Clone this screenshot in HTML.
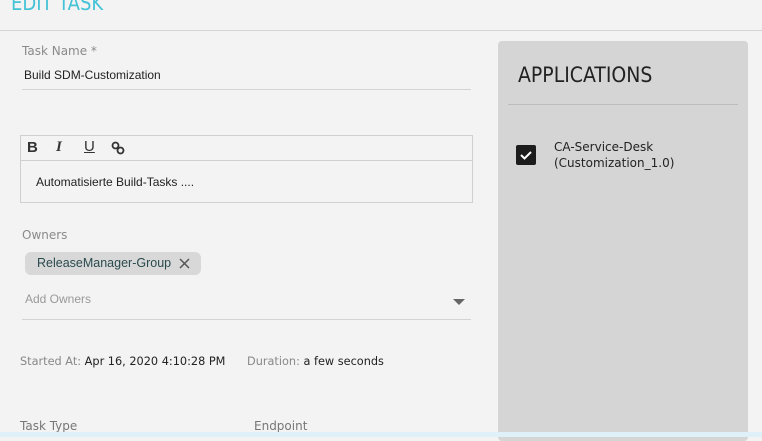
<!DOCTYPE html>
<html><head><style>
body{margin:0;width:762px;height:437px;background:#f3f3f3;position:relative;overflow:hidden;font-family:"Liberation Sans",sans-serif;}
.a{position:absolute;white-space:nowrap}
.dv{font-family:"DejaVu Sans",sans-serif}
</style></head><body>
<div class="a" style="left:11px;top:-9px;font-size:20px;color:#45c3d6;font-family:'DejaVu Sans Condensed','DejaVu Sans',sans-serif;letter-spacing:0px">EDIT TASK</div>
<div class="a" style="left:0;top:30px;width:762px;height:1px;background:#d6d6d6"></div>

<div class="a dv" style="left:22px;top:44px;font-size:12px;color:#8a8a8a">Task Name *</div>
<div class="a" style="left:24px;top:68px;font-size:12px;color:#222">Build SDM-Customization</div>
<div class="a" style="left:22px;top:89px;width:449px;height:1px;background:#d3d3d3"></div>

<div class="a" style="left:20px;top:135px;width:451px;height:66px;border:1px solid #cfcfcf"></div>
<div class="a" style="left:21px;top:160px;width:451px;height:1px;background:#cfcfcf"></div>
<div class="a" style="left:27px;top:139px;font-size:15px;font-weight:bold;color:#333">B</div>
<div class="a" style="left:56px;top:139px;font-size:15px;font-style:italic;font-family:'Liberation Serif',serif;font-weight:bold;color:#333">I</div>
<div class="a" style="left:84px;top:138px;font-size:15px;text-decoration:underline;color:#333">U</div>
<svg class="a" style="left:111px;top:141px" width="14" height="14" viewBox="0 0 14 14"><g fill="none" stroke="#333" stroke-width="1.8"><rect x="1.5" y="1.5" width="6" height="6" rx="3"/><rect x="6.5" y="6.5" width="6" height="6" rx="3"/></g></svg>
<div class="a" style="left:36px;top:175px;font-size:12px;color:#222">Automatisierte Build-Tasks ....</div>

<div class="a dv" style="left:22px;top:228px;font-size:12px;color:#8a8a8a">Owners</div>
<div class="a" style="left:25px;top:252px;width:176px;height:23px;border-radius:6px;background:#d8d8d8"></div>
<div class="a" style="left:37px;top:256px;font-size:12.5px;color:#2a4a4e">ReleaseManager-Group</div>
<svg class="a" style="left:179px;top:258px" width="11" height="11" viewBox="0 0 11 11"><path d="M1 1L10 10M10 1L1 10" stroke="#555" stroke-width="1.5"/></svg>
<div class="a" style="left:25px;top:292px;font-size:12px;color:#999">Add Owners</div>
<svg class="a" style="left:453px;top:299px" width="12" height="6"><path d="M0 0L12 0L6 6Z" fill="#666"/></svg>
<div class="a" style="left:22px;top:319px;width:449px;height:1px;background:#d3d3d3"></div>

<div class="a dv" style="left:20px;top:355px;font-size:11.3px;color:#888">Started At: <span style="color:#222">Apr 16, 2020 4:10:28 PM</span></div>
<div class="a dv" style="left:247px;top:355px;font-size:11.3px;color:#888">Duration: <span style="color:#222">a few seconds</span></div>

<div class="a dv" style="left:20px;top:419px;font-size:12px;color:#777">Task Type</div>
<div class="a dv" style="left:254px;top:419px;font-size:12px;color:#777">Endpoint</div>

<div class="a" style="left:498px;top:41px;width:250px;height:400px;background:#d5d5d5;border-radius:4px"></div>
<div class="a" style="left:518px;top:63px;font-size:21px;color:#222;font-family:'DejaVu Sans Condensed','DejaVu Sans',sans-serif">APPLICATIONS</div>
<div class="a" style="left:508px;top:104px;width:230px;height:1px;background:#bdbdbd"></div>
<div class="a" style="left:516px;top:145px;width:20px;height:20px;background:#1c1c1c;border-radius:2px"></div>
<svg class="a" style="left:516px;top:145px" width="20" height="20"><path d="M5 10L8.5 13.5L15 7" fill="none" stroke="#fff" stroke-width="2"/></svg>
<div class="a dv" style="left:554px;top:139px;font-size:12px;color:#222;line-height:16px">CA-Service-Desk<br>(Customization_1.0)</div>

<div class="a" style="left:0;top:432px;width:762px;height:5px;background:#dff0f8"></div>
</body></html>
